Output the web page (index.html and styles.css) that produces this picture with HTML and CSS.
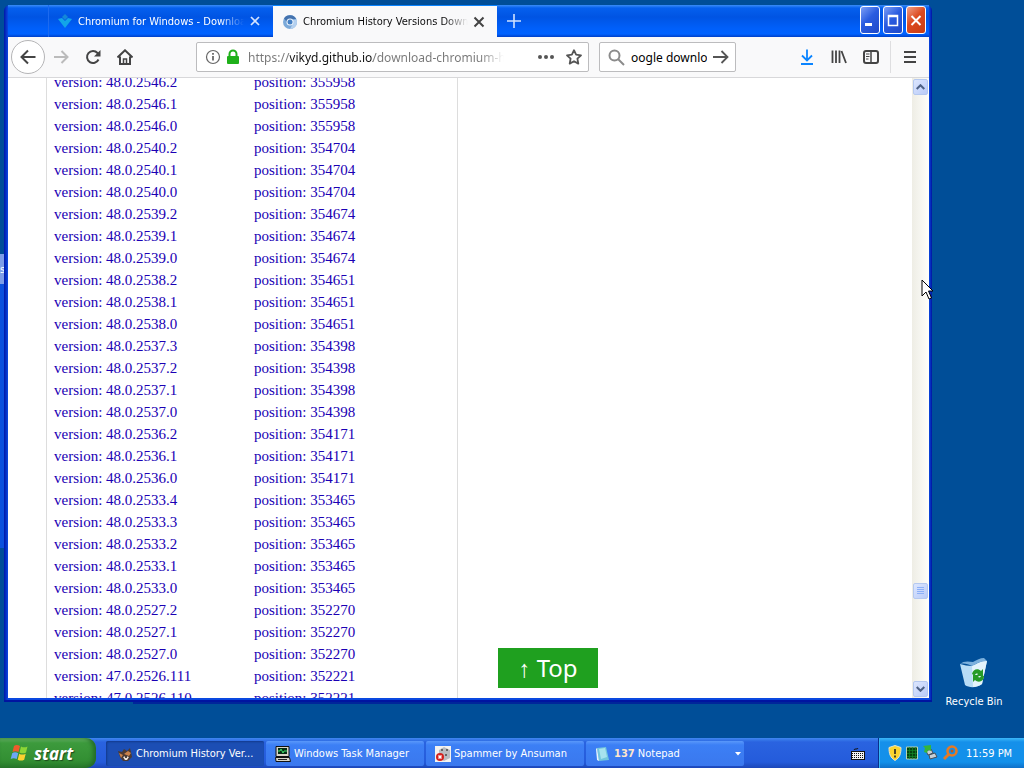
FILE: index.html
```
<!DOCTYPE html>
<html lang="en">
<head>
    <meta charset="UTF-8">
    <meta name="viewport" content="width=device-width, initial-scale=1.0">
    <title>Chromium History Versions Download</title>
    <link rel="stylesheet" href="styles.css">
</head>
<body>
    <div class="desktop">
        <div class="back-window"><span class="back-tab">s</span></div>
        <div class="back-edge"></div>

        <main class="window">
            <header class="titlebar">
                <div class="tabs">
                    <div class="tab">
                        <svg class="favicon" width="16" height="16" viewBox="0 0 16 16"><path d="M8 1l3 3-3 3-3-3z" fill="#1487d8"/><path d="M1 6l4-1 3 3 3-3 4 1-7 9z" fill="#12a5e8"/></svg>
                        <a href="#" class="tab-title">Chromium for Windows - Download</a>
                        <button class="tab-close" aria-label="Close tab"><svg width="12" height="12" viewBox="0 0 12 12"><path d="M2 2l8 8M10 2l-8 8" stroke="currentColor" stroke-width="1.7"/></svg></button>
                    </div>
                    <div class="tab active">
                        <svg class="favicon" width="16" height="16" viewBox="0 0 16 16"><circle cx="8" cy="8" r="7" fill="#7ba9d9"/><path d="M2 4.5A7 7 0 0 1 14.200 5H8a3 3 0 0 0-3 3z" fill="#4573ae"/><path d="M14.500 5.500A7 7 0 0 1 8 15l3-5.500L11 6z" fill="#b4d0ef"/><circle cx="8" cy="8" r="3.500" fill="#eef5fc"/><circle cx="8" cy="8" r="2.500" fill="#4580c4"/></svg>
                        <a href="#" class="tab-title">Chromium History Versions Download</a>
                        <button class="tab-close" aria-label="Close tab"><svg width="12" height="12" viewBox="0 0 12 12"><path d="M1.500 1.500l9 9M10.500 1.500l-9 9" stroke="currentColor" stroke-width="2"/></svg></button>
                    </div>
                    <button class="new-tab" aria-label="New tab"><svg width="14" height="14" viewBox="0 0 14 14"><path d="M7 0v14M0 7h14" stroke="currentColor" stroke-width="1.600"/></svg></button>
                </div>
                <div class="win-buttons">
                    <button class="win-btn" aria-label="Minimize"><svg width="18" height="24" viewBox="0 0 18 24"><path d="M4 16.500h7" stroke="#fff" stroke-width="3"/></svg></button>
                    <button class="win-btn" aria-label="Maximize"><svg width="18" height="24" viewBox="0 0 18 24"><path d="M4.500 7.500h9v10h-9zM4 8.500h10" stroke="#fff" stroke-width="1.500" fill="none"/></svg></button>
                    <button class="win-btn close" aria-label="Close"><svg width="18" height="24" viewBox="0 0 18 24"><path d="M4.500 8l9 9M13.500 8l-9 9" stroke="#fff" stroke-width="2"/></svg></button>
                </div>
            </header>

            <nav class="toolbar">
                <button class="tool back" aria-label="Back"><svg width="16" height="16" viewBox="0 0 16 16"><path d="M15.500 8H2M8 1.500L1.500 8 8 14.500" fill="none" stroke="currentColor" stroke-width="2"/></svg></button>
                <button class="tool forward" aria-label="Forward"><svg width="16" height="16" viewBox="0 0 16 16"><path d="M1 8h13M8.500 2l6 6-6 6" fill="none" stroke="currentColor" stroke-width="2"/></svg></button>
                <button class="tool" aria-label="Reload"><svg width="16" height="16" viewBox="0 0 16 16"><path d="M13.500 10.500A6 6 0 1 1 12.500 4L14 5.500" fill="none" stroke="currentColor" stroke-width="2"/><path d="M15.500 1v6.500H9z" fill="currentColor"/></svg></button>
                <button class="tool" aria-label="Home"><svg width="16" height="16" viewBox="0 0 16 16"><path d="M.5 8.500L8 1.300l7.500 7.200M3 7.500V15h10V7.500" fill="none" stroke="currentColor" stroke-width="2"/><path d="M6.500 15v-5h3v5" fill="none" stroke="currentColor" stroke-width="1.500"/></svg></button>
                <div class="field url-field">
                    <svg width="16" height="16" viewBox="0 0 16 16"><circle cx="8" cy="8" r="6.500" fill="none" stroke="#666" stroke-width="1.200"/><path d="M8 7v4.500M8 4v1.800" stroke="#555" stroke-width="1.600"/></svg>
                    <svg width="14" height="16" viewBox="0 0 14 16"><path d="M3.500 8V5a3.500 3.500 0 0 1 7 0v3" fill="none" stroke="#1fb01a" stroke-width="2"/><rect x="1" y="7" width="12" height="8" rx="1" fill="#1fb01a"/></svg>
                    <input class="url" type="text" aria-label="Address" value="https://vikyd.github.io/download-chromium-history-version/">
                    <button class="inner" aria-label="Page actions"><svg width="16" height="16" viewBox="0 0 16 16" fill="#555"><circle cx="2" cy="8" r="2"/><circle cx="8" cy="8" r="2"/><circle cx="14" cy="8" r="2"/></svg></button>
                    <button class="inner" aria-label="Bookmark"><svg width="16" height="16" viewBox="0 0 16 16"><path d="M8 1.200l2.100 4.500 4.900.6-3.600 3.400.9 4.900L8 12.200l-4.300 2.400.9-4.900L1 6.300l4.900-.6z" fill="none" stroke="#555" stroke-width="1.800" stroke-linejoin="round"/></svg></button>
                </div>
                <div class="field search-field">
                    <svg width="17" height="17" viewBox="0 0 17 17"><circle cx="6.500" cy="6.500" r="5" fill="none" stroke="#8b8b8b" stroke-width="2"/><path d="M10 10l6 6" stroke="#8b8b8b" stroke-width="2"/></svg>
                    <input class="search" type="text" aria-label="Search" value="oogle download">
                    <button class="inner" aria-label="Go"><svg width="16" height="16" viewBox="0 0 16 16"><path d="M0 8h14M8.500 2l6 6-6 6" fill="none" stroke="#555" stroke-width="1.800"/></svg></button>
                </div>
                <div class="tools-right">
                    <button class="tool download" aria-label="Downloads"><svg width="16" height="16" viewBox="0 0 16 16"><path d="M8 .5v11M3 6.500l5 5 5-5M2 15h12" fill="none" stroke="currentColor" stroke-width="1.800"/></svg></button>
                    <button class="tool" aria-label="Library"><svg width="16" height="16" viewBox="0 0 16 16"><path d="M1.500 1.500V14M5 1.500V14M8.500 1.500V14M10.500 2L15 14" stroke="currentColor" stroke-width="1.800"/></svg></button>
                    <button class="tool" aria-label="Sidebars"><svg width="16" height="16" viewBox="0 0 16 16"><rect x="1" y="2" width="14" height="12" rx="2" fill="none" stroke="currentColor" stroke-width="2"/><path d="M8 2v12" stroke="currentColor" stroke-width="1.500"/><path d="M3 5h3.500M3 7.500h3.500M3 10h2.500" stroke="currentColor"/></svg></button>
                    <button class="tool menu" aria-label="Menu"><svg width="14" height="14" viewBox="0 0 14 14"><path d="M1 2h12M1 7h12M1 12h12" stroke="currentColor" stroke-width="2"/></svg></button>
                </div>
            </nav>

            <div class="page">
                <div class="content">
                    <table class="versions">
                        <tbody>
                            <tr><td><a href="#">version: 48.0.2546.2</a></td><td><a href="#">position: 355958</a></td></tr>
                            <tr><td><a href="#">version: 48.0.2546.1</a></td><td><a href="#">position: 355958</a></td></tr>
                            <tr><td><a href="#">version: 48.0.2546.0</a></td><td><a href="#">position: 355958</a></td></tr>
                            <tr><td><a href="#">version: 48.0.2540.2</a></td><td><a href="#">position: 354704</a></td></tr>
                            <tr><td><a href="#">version: 48.0.2540.1</a></td><td><a href="#">position: 354704</a></td></tr>
                            <tr><td><a href="#">version: 48.0.2540.0</a></td><td><a href="#">position: 354704</a></td></tr>
                            <tr><td><a href="#">version: 48.0.2539.2</a></td><td><a href="#">position: 354674</a></td></tr>
                            <tr><td><a href="#">version: 48.0.2539.1</a></td><td><a href="#">position: 354674</a></td></tr>
                            <tr><td><a href="#">version: 48.0.2539.0</a></td><td><a href="#">position: 354674</a></td></tr>
                            <tr><td><a href="#">version: 48.0.2538.2</a></td><td><a href="#">position: 354651</a></td></tr>
                            <tr><td><a href="#">version: 48.0.2538.1</a></td><td><a href="#">position: 354651</a></td></tr>
                            <tr><td><a href="#">version: 48.0.2538.0</a></td><td><a href="#">position: 354651</a></td></tr>
                            <tr><td><a href="#">version: 48.0.2537.3</a></td><td><a href="#">position: 354398</a></td></tr>
                            <tr><td><a href="#">version: 48.0.2537.2</a></td><td><a href="#">position: 354398</a></td></tr>
                            <tr><td><a href="#">version: 48.0.2537.1</a></td><td><a href="#">position: 354398</a></td></tr>
                            <tr><td><a href="#">version: 48.0.2537.0</a></td><td><a href="#">position: 354398</a></td></tr>
                            <tr><td><a href="#">version: 48.0.2536.2</a></td><td><a href="#">position: 354171</a></td></tr>
                            <tr><td><a href="#">version: 48.0.2536.1</a></td><td><a href="#">position: 354171</a></td></tr>
                            <tr><td><a href="#">version: 48.0.2536.0</a></td><td><a href="#">position: 354171</a></td></tr>
                            <tr><td><a href="#">version: 48.0.2533.4</a></td><td><a href="#">position: 353465</a></td></tr>
                            <tr><td><a href="#">version: 48.0.2533.3</a></td><td><a href="#">position: 353465</a></td></tr>
                            <tr><td><a href="#">version: 48.0.2533.2</a></td><td><a href="#">position: 353465</a></td></tr>
                            <tr><td><a href="#">version: 48.0.2533.1</a></td><td><a href="#">position: 353465</a></td></tr>
                            <tr><td><a href="#">version: 48.0.2533.0</a></td><td><a href="#">position: 353465</a></td></tr>
                            <tr><td><a href="#">version: 48.0.2527.2</a></td><td><a href="#">position: 352270</a></td></tr>
                            <tr><td><a href="#">version: 48.0.2527.1</a></td><td><a href="#">position: 352270</a></td></tr>
                            <tr><td><a href="#">version: 48.0.2527.0</a></td><td><a href="#">position: 352270</a></td></tr>
                            <tr><td><a href="#">version: 47.0.2526.111</a></td><td><a href="#">position: 352221</a></td></tr>
                            <tr><td><a href="#">version: 47.0.2526.110</a></td><td><a href="#">position: 352221</a></td></tr>
                        </tbody>
                    </table>
                    <button class="top-btn">↑ Top</button>
                </div>
                <div class="scrollbar">
                    <button class="scroll-btn" aria-label="Scroll up"><svg width="9" height="6" viewBox="0 0 9 6"><path d="M.7 5l3.800-3.800L8.300 5" fill="none" stroke="#4d6185" stroke-width="2"/></svg></button>
                    <div class="track">
                        <div class="thumb"><svg width="8" height="8" viewBox="0 0 8 8"><path d="M0 .5h7M0 2.500h7M0 4.500h7M0 6.500h7" stroke="#8cb0f8"/></svg></div>
                    </div>
                    <button class="scroll-btn" aria-label="Scroll down"><svg width="9" height="6" viewBox="0 0 9 6"><path d="M.7 1l3.800 3.800L8.300 1" fill="none" stroke="#4d6185" stroke-width="2"/></svg></button>
                </div>
            </div>
        </main>

        <a href="#" class="desktop-icon">
            <svg width="32" height="32" viewBox="0 0 32 32">
                <path d="M2 7l5 21c4 3 12 3 17-1l5-23c-6 0-11 3-15 5C10 9 6 8 2 7z" fill="#b8dcf6"/>
                <path d="M2 7c4-1 8 0 12 2 4-2 9-5 15-5l-3-3c-4 0-7 2-11 4C10 4 5 4 2 7z" fill="#7bb0dd"/>
                <path d="M14 9c5-2 9-5 15-5l-5 23c-3 2-6 3-9 3z" fill="#e3f3fc"/>
                <path d="M14 17c1-5 6-6 9-3l2-2v7h-7l2-2c-2-1-3 0-3 2zM26 19c0 6-6 7-9 4l-2 2v-7h7l-2 2c2 1 3 0 3-2z" fill="#269b28"/>
            </svg>
            <span>Recycle Bin</span>
        </a>

        <svg class="cursor" width="13" height="22" viewBox="0 0 13 22"><path d="M1 1v16l4-4 3 7 2.500-1-3-7H12z" fill="#fff" stroke="#000"/></svg>
    </div>

    <footer class="taskbar">
        <button class="start">
            <svg width="20" height="20" viewBox="0 0 20 20"><path d="M4 3c2-1.500 4-1 6 0L8.500 9c-2-1-4-1.300-6 0z" fill="#ef5b2c"/><path d="M11 3.500c2 1 4 1.300 6.500 0L16 9.500c-2 1.300-4.500 1-6.500 0z" fill="#8cd636"/><path d="M2.200 10.200c2-1.300 4-1 6 0L6.700 16c-2-1-4-1.300-6 0z" fill="#6da7f5"/><path d="M9.200 10.700c2 1 4 1.300 6.500 0l-1.500 6c-2.500 1.300-4.500 1-6.500 0z" fill="#fcd230"/></svg>
            <span>start</span>
        </button>
        <div class="tasks">
            <button class="task pressed">
                <svg width="16" height="16" viewBox="0 0 16 16"><path d="M1 5l4 1 2-3 3 2 3-3 1 4 1 5-4 4H6l-3-4z" fill="#4b3a33"/><path d="M2 7l4 2-2 3zM7 8l4-3 3 2-2 3z" fill="#c9824a"/><path d="M6 11l3-1 3 1-2 3H8z" fill="#f1e5da"/><circle cx="9" cy="11" r="1" fill="#111"/></svg>
                <span>Chromium History Ver...</span>
            </button>
            <button class="task">
                <svg width="16" height="16" viewBox="0 0 16 16"><path d="M1 .5h13v10H1zM.5 11.500h14l1 4H1z" fill="#d8d5c8" stroke="#111"/><path d="M3 2h9v6H3z" fill="#062b12"/><path d="M3 5h2l1-2 2 4 1-2h3" fill="none" stroke="#3fe06a"/><path d="M3 13.500h9" stroke="#222"/></svg>
                <span>Windows Task Manager</span>
            </button>
            <button class="task">
                <svg width="16" height="16" viewBox="0 0 16 16"><path d="M0 0h16v16H0z" fill="#f4f2ef"/><path d="M4 4l5-3 6 3v8l-6 3-5-3z" fill="#b9bcc0"/><path d="M6 3h2v2H6zM11 3h2v2h-2zM10 8h2v2h-2z" fill="#666"/><circle cx="5" cy="11" r="4" fill="#d5211d"/><path d="M3.500 9.500l3 3M6.500 9.500l-3 3" stroke="#fff" stroke-width="1.500"/></svg>
                <span>Spammer by Ansuman</span>
            </button>
            <button class="task group">
                <svg width="16" height="16" viewBox="0 0 16 16"><path d="M2 2l9-1 3 13-10 1z" fill="#73c6dc"/><path d="M2 2l2 13-2-1L1 3z" fill="#e8f6fa"/><path d="M4 3l6-1 2 9-6 2z" fill="#a7e2ee"/></svg>
                <span><b>137</b> Notepad</span>
                <svg class="caret" width="6" height="4" viewBox="0 0 6 4"><path d="M0 0h6L3 3.500z" fill="#fff"/></svg>
            </button>
        </div>
        <button class="keyboard" aria-label="Language bar"><svg width="14" height="14" viewBox="0 0 14 14"><path d="M3 3c0-2 4 0 4-2" fill="none" stroke="#111"/><path d="M0 4h14v9H0z" fill="#111"/><path d="M1 5h12v7H1z" fill="#f2f2f2"/><path d="M1 6.500h12M1 8.500h12M1 10.500h12" stroke="#111" stroke-dasharray="1 1"/></svg></button>
        <div class="tray">
            <svg width="14" height="16" viewBox="0 0 14 16"><path d="M7 .5l6 2c0 6-1 10-6 13-5-3-6-7-6-13z" fill="#fbd52e" stroke="#e8e4c8"/><path d="M7 4v5M7 10.500v2" stroke="#222" stroke-width="1.600"/></svg>
            <svg width="12" height="14" viewBox="0 0 12 14"><path d="M.5 1h11v12H.5z" fill="#06420f" stroke="#b9d4b4"/><path d="M1 4.500h10M1 7.500h10M1 10.500h10M3.500 1v12M6.500 1v12M9.500 1v12" stroke="#148a2a" stroke-width=".7"/></svg>
            <svg width="16" height="16" viewBox="0 0 16 16"><path d="M4 6l5-2 2 4-5 2zM7 10l6-2 2 4-7 2z" fill="#c7cfd6" stroke="#454f5a"/><path d="M1 1l8-1v6L6 5 5 8 2 7l1-4z" fill="#35b53a"/></svg>
            <svg width="17" height="16" viewBox="0 0 17 16"><circle cx="10" cy="6" r="4.500" fill="none" stroke="#e57a26" stroke-width="2.600"/><path d="M7 9l-5 5" stroke="#e57a26" stroke-width="3"/><circle cx="10" cy="6" r="1.500" fill="#c3571a"/></svg>
            <time>11:59 PM</time>
        </div>
    </footer>
</body>
</html>
```
FILE: styles.css
```
* {
    box-sizing: border-box;
}
body {
    margin: 0;
    height: 100vh;
    display: flex;
    flex-direction: column;
    overflow: hidden;
    background: #004e98;
    font-family: "DejaVu Sans Condensed", "DejaVu Sans", sans-serif;
    font-size: 11px;
}
button {
    border: 0;
    padding: 0;
    background: none;
    color: inherit;
    font: inherit;
}
a {
    text-decoration: none;
}
svg {
    display: block;
    flex: none;
}
.desktop {
    position: relative;
    flex: 1;
    min-height: 0;
}

/* windows on the desktop */
.back-window {
    position: absolute;
    top: 254px;
    bottom: 190px;
    left: 0;
    width: 6px;
    background: #0b51dd;
}
.back-tab {
    display: block;
    height: 30px;
    line-height: 32px;
    background: #7d9ee8;
    color: #fff;
}
.back-edge {
    position: absolute;
    left: 133px;
    right: 124px;
    bottom: 34px;
    height: 10px;
    background: #00259a;
}
.window {
    position: absolute;
    top: 5px;
    right: 92px;
    bottom: 36px;
    left: 4px;
    display: flex;
    flex-direction: column;
    padding: 0 3px 4px 4px;
    border-radius: 6px 6px 0 0;
    background: linear-gradient(90deg, #0018a8, #0a48e0 4px, #0a48e0 calc(100% - 3px), #0014a0);
    box-shadow: inset 0 -2px #0014a0;
}
.titlebar {
    display: flex;
    justify-content: space-between;
    height: 32px;
    background: linear-gradient(#3a8df8, #0560ee 3px, #0054e3 12px, #0060fb 24px, #0062ff 29px, #0040c8);
}
.tabs {
    display: flex;
    padding-left: 40px;
}
.tab {
    display: flex;
    align-items: center;
    gap: 5px;
    width: 225px;
    padding: 0 12px 0 8px;
    border-left: 1px solid #1c6af0;
    color: #fff;
}
.tab.active {
    width: 224px;
    padding-left: 9px;
    border-top: 1px solid #0a84ff;
    border-left: 0;
    background: #f9f9fa;
    color: #0c0c0d;
}
.tab-title {
    flex: 1;
    overflow: hidden;
    white-space: nowrap;
    color: inherit;
    -webkit-mask-image: linear-gradient(90deg, #000 calc(100% - 24px), transparent);
    mask-image: linear-gradient(90deg, #000 calc(100% - 24px), transparent);
}
.tab-close {
    color: #d4e4ff;
}
.active .tab-close {
    color: #444;
}
.new-tab {
    width: 34px;
    display: grid;
    place-items: center;
    color: #cfe2ff;
}
.win-buttons {
    display: flex;
    gap: 3px;
    padding: 1px 3px 0 0;
}
.win-btn {
    display: grid;
    place-items: center;
    width: 20px;
    height: 28px;
    border: 1px solid #fff;
    border-radius: 3px;
    background: linear-gradient(135deg, #7d9ff5, #2a5ce0 45%, #1e48c8);
}
.win-btn.close {
    background: linear-gradient(135deg, #f0a088, #dc4a20 45%, #c83c14);
}

/* navigation toolbar */
.toolbar {
    display: flex;
    align-items: center;
    height: 41px;
    padding-left: 3px;
    background: #f9f9fa;
    border-bottom: 1px solid #d8d8da;
    color: #444;
}
.tool {
    display: grid;
    place-items: center;
    width: 32px;
    height: 32px;
}
.back {
    width: 34px;
    height: 34px;
    border: 1px solid #b5b5b7;
    border-radius: 50%;
    background: #fff;
}
.forward {
    color: #bbb;
}
.field {
    display: flex;
    align-items: center;
    height: 30px;
    border: 1px solid #bcbcbe;
    border-radius: 2px;
    background: #fff;
}
.field input {
    flex: 1;
    min-width: 0;
    padding: 0;
    border: 0;
    outline: 0;
    background: none;
    font-family: "Noto Sans", sans-serif;
    font-size: 12px;
}
.url-field {
    flex: 1;
    gap: 5px;
    margin-left: 55px;
    padding: 0 6px 0 8px;
}
/* host part of the address is darker than the rest */
.field .url {
    margin: 0 22px 0 3px;
    background: linear-gradient(90deg, #777 42px, #111 42px, #111 125px, #777 125px, #777 calc(100% - 24px), transparent);
    -webkit-background-clip: text;
    background-clip: text;
    color: transparent;
}
.url-field .inner {
    margin-left: 7px;
}
.search-field {
    width: 137px;
    margin-left: 10px;
    padding: 0 6px 0 8px;
    gap: 6px;
}
.tools-right {
    display: flex;
    align-items: center;
    margin-left: 55px;
}
.download {
    color: #0a84ff;
}
.menu {
    width: 39px;
    margin-left: 3px;
    border-left: 1px solid #dedee0;
}

/* page */
.page {
    display: flex;
    flex: 1;
    min-height: 0;
    background: #fff;
}
.content {
    position: relative;
    flex: 1;
    overflow: hidden;
    padding-left: 38px;
}
.versions {
    width: 412px;
    margin-top: -7px;
    padding-left: 7px;
    border: solid #ddd;
    border-width: 0 1px;
    border-spacing: 0;
    table-layout: fixed;
    font: 15px/22px "Liberation Serif", serif;
}
.versions td {
    padding: 0;
}
.versions td:first-child {
    width: 200px;
}
.versions a {
    color: #1a00b4;
}
.top-btn {
    position: absolute;
    bottom: 10px;
    left: 490px;
    width: 100px;
    height: 40px;
    background: #1fa01f;
    color: #fff;
    font-family: "Noto Sans", sans-serif;
    font-size: 24px;
    line-height: 40px;
}
.scrollbar {
    display: flex;
    flex-direction: column;
    width: 17px;
    padding: 1px;
    background: linear-gradient(90deg, #eeede5, #fefefb);
}
.scroll-btn,
.thumb {
    display: grid;
    place-items: center;
    width: 15px;
    height: 16px;
    border: 1px solid #b4c8f0;
    border-radius: 2px;
    background: linear-gradient(135deg, #dce6fe, #b9cbf8);
}
.track {
    display: flex;
    flex: 1;
    flex-direction: column;
    justify-content: flex-end;
    padding-bottom: 82px;
}

.desktop-icon {
    position: absolute;
    right: 14px;
    bottom: 30px;
    display: flex;
    flex-direction: column;
    align-items: center;
    gap: 6px;
    width: 72px;
    color: #fff;
    white-space: nowrap;
}
.cursor {
    position: absolute;
    top: 279px;
    right: 90px;
}

/* taskbar */
.taskbar {
    display: flex;
    height: 30px;
    background: linear-gradient(#3f87f0, #2a63e0 4px, #245bdb 24px, #1c46b8);
    color: #fff;
}
.start {
    display: flex;
    align-items: center;
    gap: 4px;
    width: 96px;
    padding-left: 10px;
    border-radius: 0 10px 10px 0;
    background: linear-gradient(#6cb86a, #3c9a3c 5px, #338f33 22px, #287a2a);
    box-shadow: inset -3px 0 4px #236b28;
    font-family: "Noto Sans", sans-serif;
    font-size: 17px;
    font-style: italic;
    font-weight: bold;
    text-shadow: 1px 1px 1px #1c4a1c;
}
.tasks {
    display: flex;
    flex: 1;
    gap: 2px;
    padding: 3px 0 2px 10px;
}
.task {
    display: flex;
    flex: 0 1 158px;
    align-items: center;
    gap: 3px;
    padding: 0 3px 0 9px;
    border-radius: 2px;
    background: linear-gradient(#5a98fa, #3c7ff5 4px, #3a78ee);
    white-space: nowrap;
}
.task.pressed {
    padding-left: 11px;
    background: #1c4eb4;
    box-shadow: inset 1px 1px 2px #123a8c;
}
.task b {
    color: #ffe6cc;
}
.caret {
    margin-left: auto;
}
.keyboard {
    padding: 2px 13px 0 0;
}
.tray {
    display: flex;
    align-items: center;
    gap: 4px;
    width: 146px;
    padding-left: 9px;
    border-left: 1px solid #0a2f8c;
    background: linear-gradient(#3cb8f8, #1590ea 4px, #1290ea 24px, #0f6fc8);
    box-shadow: inset 1px 0 #35b8f5;
}
.tray time {
    margin-left: 3px;
}
```
